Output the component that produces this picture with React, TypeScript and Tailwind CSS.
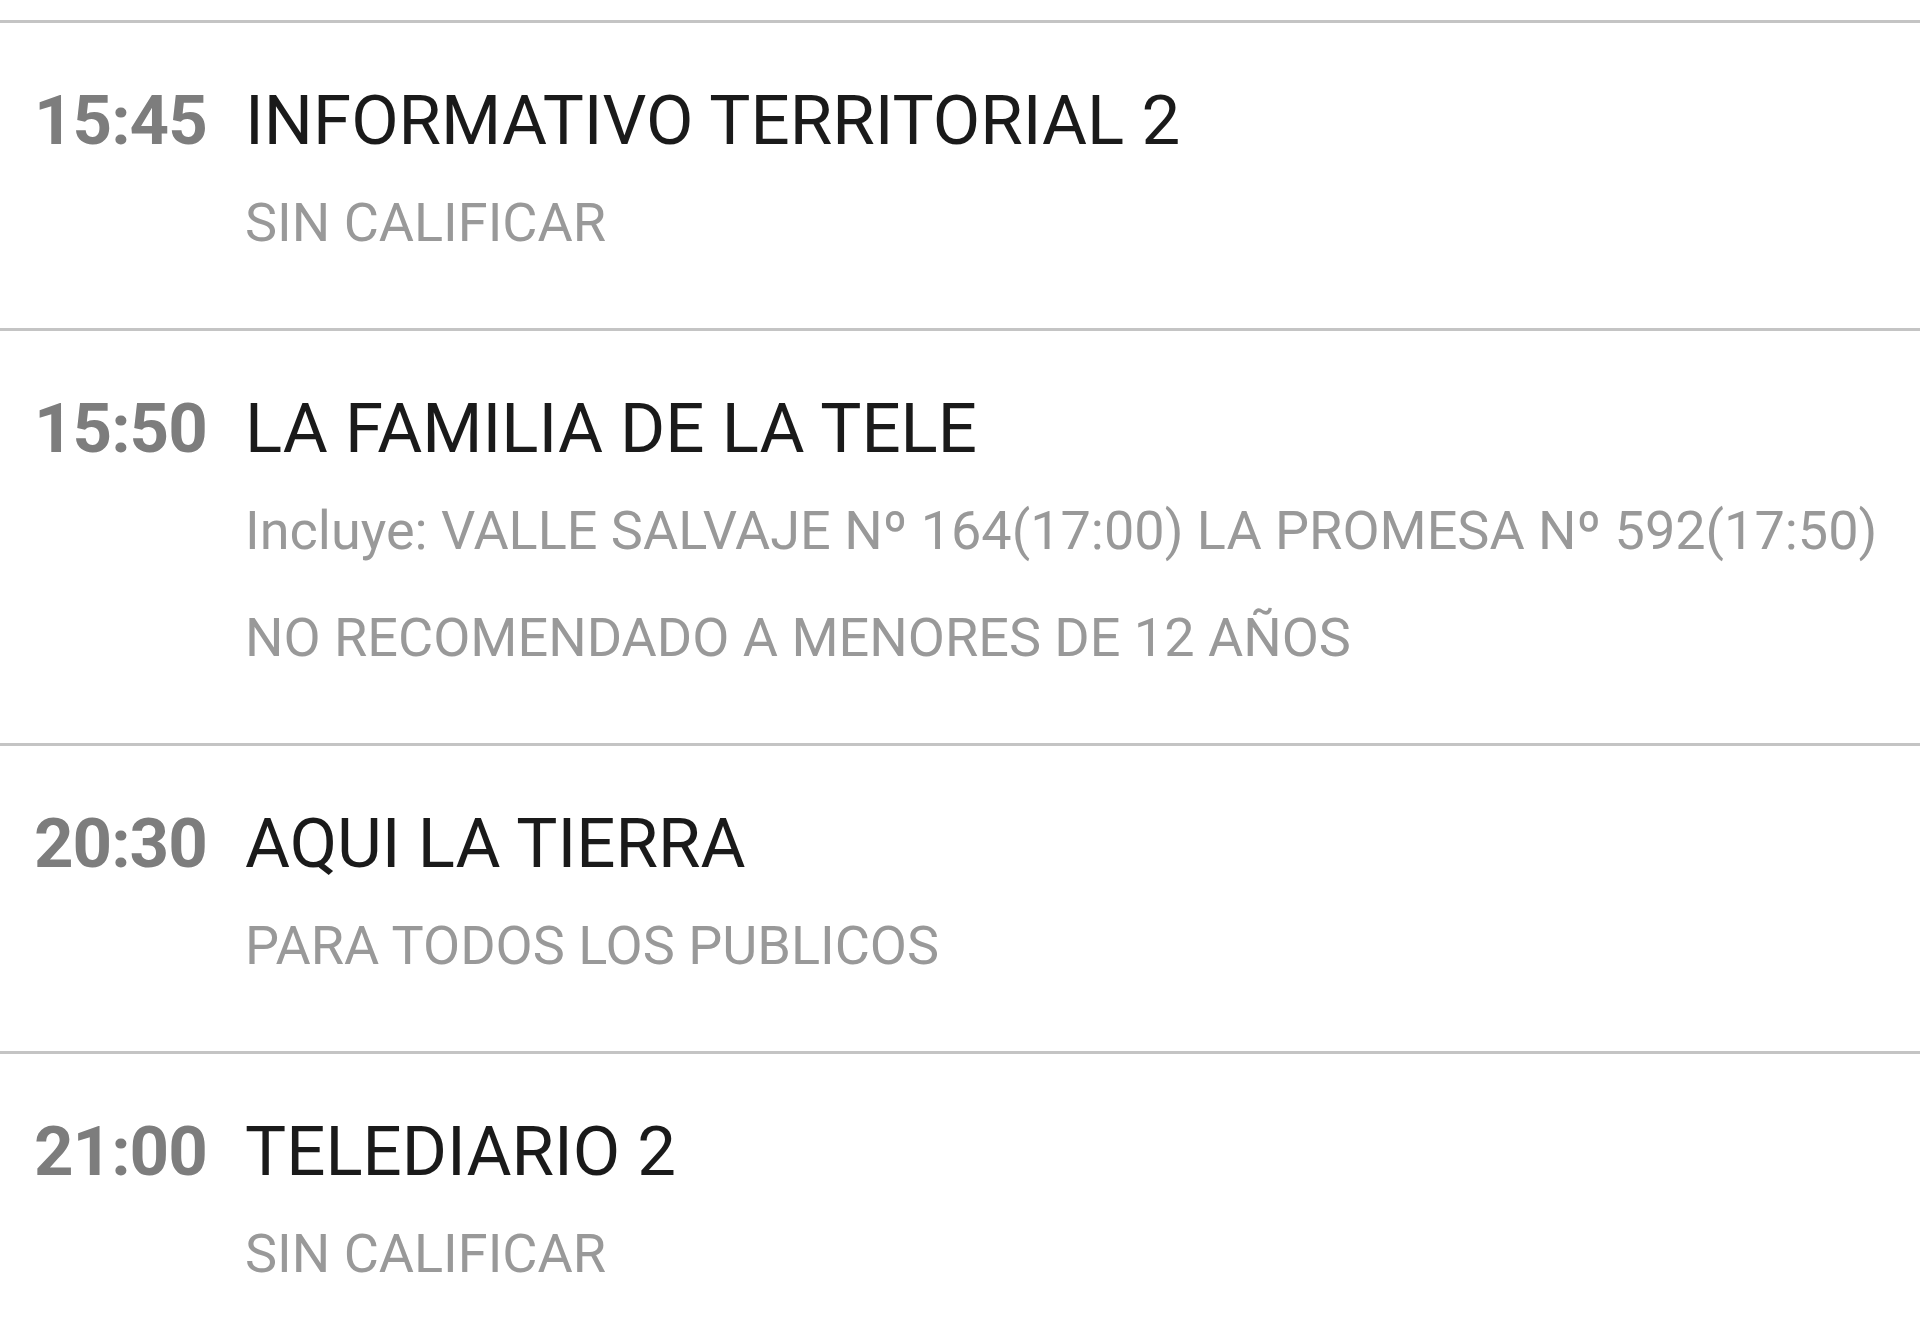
import React from "react";

type Item = { time: string; title: string; lines: string[] };

const items: Item[] = [
  { time: "15:45", title: "INFORMATIVO TERRITORIAL 2", lines: ["SIN CALIFICAR"] },
  {
    time: "15:50",
    title: "LA FAMILIA DE LA TELE",
    lines: [
      "Incluye: VALLE SALVAJE Nº 164(17:00) LA PROMESA Nº 592(17:50)",
      "NO RECOMENDADO A MENORES DE 12 AÑOS",
    ],
  },
  { time: "20:30", title: "AQUI LA TIERRA", lines: ["PARA TODOS LOS PUBLICOS"] },
  { time: "21:00", title: "TELEDIARIO 2", lines: ["SIN CALIFICAR"] },
];

export default function App() {
  return (
    <div
      className="min-h-[1343px] w-full bg-white pt-[20px]"
      style={{ fontFamily: "Roboto, 'Liberation Sans', sans-serif" }}
    >
      <ul>
        {items.map((it, i) => (
          <li
            key={i}
            className="flex border-t-[3px] border-[#c4c4c4] pl-[34px] pt-[58px] pb-[75px]"
          >
            <span className="w-[211px] shrink-0 text-[69px] leading-[80px] font-bold text-[#7d7d7d] tracking-[-1px]">
              {it.time}
            </span>
            <div className="flex flex-col">
              <span className="text-[69px] leading-[80px] text-[#1a1a1a]">
                {it.title}
              </span>
              {it.lines.map((l, j) => (
                <span
                  key={j}
                  className={
                    (j === 0 ? "mt-[32px] " : "mt-[47px] ") +
                    "text-[54px] leading-[60px] text-[#999999] whitespace-nowrap"
                  }
                >
                  {l}
                </span>
              ))}
            </div>
          </li>
        ))}
      </ul>
    </div>
  );
}
